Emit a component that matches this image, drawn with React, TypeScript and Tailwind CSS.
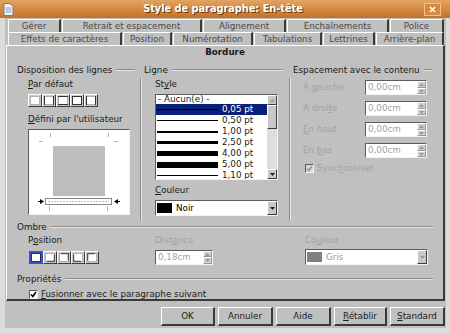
import React from "react";

const sunken = "border border-[#5c5c5c] border-b-[#f4f4f4] border-r-[#f4f4f4]";
const raised = "border border-white border-b-[#3c3c3c] border-r-[#3c3c3c]";

function U({ c }: { c: string }) {
  return <span className="underline underline-offset-[1px]">{c}</span>;
}

function Heading({ children, className }: { children: React.ReactNode; className?: string }) {
  return (
    <div className={"flex h-[10px] items-center gap-[4px] " + (className ?? "")}>
      <span className="whitespace-nowrap leading-[10px]">{children}</span>
      <div className="h-[2px] flex-1 border-t border-t-[#8c8c8c] border-b border-b-[#e6e6e6]" />
    </div>
  );
}

function Tab({ className, label }: { className: string; label: string }) {
  return (
    <div
      className={
        "flex h-[13px] shrink-0 items-center justify-center border-l border-t border-white border-r-2 border-r-[#3a3a3a] leading-none text-[#4a4a4a] " +
        className
      }
    >
      {label}
    </div>
  );
}

function Btn({ className, children }: { className: string; children: React.ReactNode }) {
  return (
    <div
      className={
        "flex h-[19px] items-center justify-center border border-white border-b-2 border-r-2 border-b-[#3a3a3a] border-r-[#3a3a3a] leading-none text-[#202020] " +
        className
      }
    >
      {children}
    </div>
  );
}

function Arrow({ up, gray }: { up?: boolean; gray?: boolean }) {
  return (
    <svg width="5" height="3" viewBox="0 0 5 3">
      <polygon points={up ? "0,3 5,3 2.5,0" : "0,0 5,0 2.5,3"} fill={gray ? "#9a9a9a" : "#222"} />
    </svg>
  );
}

function SpinField({ value, className }: { value: string; className: string }) {
  return (
    <div className={"flex h-[15px] bg-white " + sunken + " " + className}>
      <span className="flex-1 pl-[2px] leading-[13px] text-[#a2a2a2]">{value}</span>
      <div className="flex w-[9px] flex-col bg-[#cfcfcf]">
        <div className="flex flex-1 items-center justify-center border border-white border-b-[#9a9a9a] border-r-[#9a9a9a]">
          <Arrow up gray />
        </div>
        <div className="flex flex-1 items-center justify-center border border-white border-b-[#9a9a9a] border-r-[#9a9a9a]">
          <Arrow gray />
        </div>
      </div>
    </div>
  );
}

function Check({ disabled }: { disabled?: boolean }) {
  return (
    <div className={"flex h-[9px] w-[9px] items-center justify-center " + sunken + (disabled ? " bg-[#d6d6d6]" : " bg-white")}>
      <svg width="7" height="7" viewBox="0 0 7 7">
        <path d="M1 3.5 L2.8 5.5 L6 1" fill="none" stroke={disabled ? "#9a9a9a" : "#000"} strokeWidth="1.6" />
      </svg>
    </div>
  );
}

function Combo({ swatch, label, gray, className }: { swatch: string; label: string; gray?: boolean; className: string }) {
  return (
    <div className={"flex h-[16px] items-center bg-white " + sunken + " " + className}>
      <div className={"ml-[1px] h-[10px] w-[15px] " + swatch} />
      <span className={"ml-[4px] flex-1 leading-none " + (gray ? "text-[#9a9a9a]" : "text-black")}>{label}</span>
      <div className={"flex h-[14px] w-[10px] items-center justify-center bg-[#c8c8c8] " + raised}>
        <Arrow gray={gray} />
      </div>
    </div>
  );
}

function PresetBox({ edges, selected, shadow }: { edges: string; selected?: boolean; shadow?: string }) {
  return (
    <div
      className={
        "flex h-[13px] w-[14px] items-center justify-center " +
        (selected ? "border-2 border-[#3c4ec8] bg-[#c8c8c8]" : raised + " bg-[#c8c8c8]")
      }
    >
      <svg width="10" height="9" viewBox="0 0 10 9">
        <rect x="0.5" y="0.5" width="9" height="8" fill="white" stroke="#b0b0b0" />
        {edges.includes("l") && <line x1="0.5" y1="0" x2="0.5" y2="9" stroke="#333" />}
        {edges.includes("r") && <line x1="9.5" y1="0" x2="9.5" y2="9" stroke="#333" />}
        {edges.includes("t") && <line x1="0" y1="0.5" x2="10" y2="0.5" stroke="#333" />}
        {edges.includes("b") && <line x1="0" y1="8.5" x2="10" y2="8.5" stroke="#333" />}
        {shadow === "br" && <path d="M2 8.5 H9.5 V1.5" fill="none" stroke="#555" strokeWidth="1.5" />}
        {shadow === "tr" && <path d="M2 0.5 H9.5 V7.5" fill="none" stroke="#555" strokeWidth="1.5" />}
        {shadow === "bl" && <path d="M8 8.5 H0.5 V1.5" fill="none" stroke="#555" strokeWidth="1.5" />}
        {shadow === "tl" && <path d="M8 0.5 H0.5 V7.5" fill="none" stroke="#555" strokeWidth="1.5" />}
      </svg>
    </div>
  );
}

const lineStyles: { label: string; h: number }[] = [
  { label: "0,05 pt", h: 1 },
  { label: "0,50 pt", h: 1 },
  { label: "1,00 pt", h: 2 },
  { label: "2,50 pt", h: 3 },
  { label: "4,00 pt", h: 5 },
  { label: "5,00 pt", h: 6 },
  { label: "1,10 pt", h: 1 },
];

function Preview() {
  return (
    <div className={"mt-[5px] h-[86px] w-[102px] bg-white " + sunken}>
      <svg width="100" height="84" viewBox="0 0 100 84">
        <g stroke="#b4b4b4" strokeWidth="1">
          <line x1="10" y1="11.5" x2="14" y2="11.5" />
          <line x1="21.5" y1="3" x2="21.5" y2="7" />
          <line x1="79.5" y1="3" x2="79.5" y2="7" />
          <line x1="85" y1="11.5" x2="89" y2="11.5" />
          <line x1="20.5" y1="76" x2="20.5" y2="81" />
          <line x1="78.5" y1="76" x2="78.5" y2="81" />
        </g>
        <rect x="24" y="16" width="52" height="50" fill="#bdbdbd" />
        <rect x="16.5" y="68.5" width="66" height="6" fill="none" stroke="#111" strokeDasharray="1 1" />
        <line x1="19" y1="71.5" x2="80" y2="71.5" stroke="#bdbdbd" strokeDasharray="2 1" />
        <polygon points="11,69 15,71.5 11,74" fill="#000" />
        <line x1="9" y1="71.5" x2="12" y2="71.5" stroke="#000" />
        <polygon points="89,69 85,71.5 89,74" fill="#000" />
        <line x1="88" y1="71.5" x2="91" y2="71.5" stroke="#000" />
      </svg>
    </div>
  );
}

export default function App() {
  return (
    <div className="flex h-[333px] w-[450px] flex-col overflow-hidden bg-[#dcdcdc] font-['DejaVu_Sans',sans-serif] text-[8.75px] text-[#1a1a1a]">
      {/* title bar */}
      <div className="flex h-[18px] shrink-0 items-center bg-gradient-to-b from-[#e2a463] to-[#c4711f] px-[3px]">
        <svg width="11" height="13" viewBox="0 0 11 13">
          <path d="M1 0.5 H7 L10 3.5 V12.5 H1 Z" fill="#f4f4f4" stroke="#7a7a7a" />
          <path d="M2.5 5 H8.5 M2.5 7 H8.5 M2.5 9 H8.5" stroke="#8aa0c8" />
        </svg>
        <div className="flex-1 pl-[8px] text-center text-[9.75px] font-bold text-white [text-shadow:1px_1px_0_#6a3a10]">
          Style de paragraphe: En-tête
        </div>
        <div className="mr-[6px] flex h-[13px] w-[17px] items-center justify-center border border-[#f0c090] bg-[#d88a3c]">
          <svg width="7" height="7" viewBox="0 0 7 7">
            <path d="M1 1 L6 6 M6 1 L1 6" stroke="white" strokeWidth="1.6" />
          </svg>
        </div>
      </div>

      {/* dialog body */}
      <div className="ml-[5px] flex h-[310px] w-[441px] shrink-0 flex-col bg-[#c0c0c0]">
        <div className="mt-[1px] flex gap-[1px] pl-[3px]">
          <Tab className="w-[53px]" label="Gérer" />
          <Tab className="w-[140px]" label="Retrait et espacement" />
          <Tab className="w-[83px]" label="Alignement" />
          <Tab className="w-[102px]" label="Enchaînements" />
          <Tab className="w-[54px]" label="Police" />
        </div>
        <div className="flex gap-[1px] pl-[3px]">
          <Tab className="w-[114px]" label="Effets de caractères" />
          <Tab className="w-[49px]" label="Position" />
          <Tab className="w-[80px]" label="Numérotation" />
          <Tab className="w-[68px]" label="Tabulations" />
          <Tab className="w-[52px]" label="Lettrines" />
          <Tab className="w-[68px]" label="Arrière-plan" />
        </div>

        {/* panel */}
        <div className="ml-[1px] flex h-[256px] w-[439px] flex-col border-l border-t border-white border-b-2 border-r-2 border-b-[#3a3a3a] border-r-[#3a3a3a]">
          <div className="flex h-[13px] items-center justify-center font-bold leading-none">Bordure</div>

          <div className="mt-[7px] grid grid-cols-[133px_149px_1fr]">
            {/* col 1 */}
            <div className="flex flex-col">
              <Heading className="pl-[10px] pr-[5px]">Disposition des lignes</Heading>
              <div className="flex flex-col pl-[21px] pt-[4px] pb-[5px]">
                <span className="h-[10px] leading-[10px]">
                  <U c="P" />ar défaut
                </span>
                <div className="mt-[5px] flex">
                  <PresetBox edges="" />
                  <PresetBox edges="lr" />
                  <PresetBox edges="tb" />
                  <PresetBox edges="lrtb" />
                  <PresetBox edges="lr" />
                </div>
                <span className="mt-[7px] h-[10px] leading-[10px]">
                  <U c="D" />éfini par l'utilisateur
                </span>
                <Preview />
              </div>
            </div>

            {/* col 2 */}
            <div className="flex flex-col">
              <Heading className="pl-[4px] pr-[6px]">Ligne</Heading>
              <div className="mt-[3px] flex flex-1 flex-col border-l border-l-[#8c8c8c] pl-[14px] pt-[1px] shadow-[inset_1px_0_0_#e6e6e6]">
                <span className="h-[10px] leading-[10px]">
                  St<U c="y" />le
                </span>
                <div className={"mt-[5px] flex h-[86px] w-[123px] overflow-hidden bg-white " + sunken}>
                  <div className="flex flex-1 flex-col">
                    <div className="flex h-[11px] items-center pl-[2px] leading-none">- Aucun(e) -</div>
                    {lineStyles.map((s, i) => (
                      <div
                        key={i}
                        className={"flex h-[11px] shrink-0 items-center leading-none " + (i === 0 ? "bg-[#0a1f78] text-white" : "")}
                      >
                        <div className="ml-[1px] flex w-[61px] items-center">
                          <div className="w-full bg-black" style={{ height: s.h }} />
                        </div>
                        <span className="ml-[4px]">{s.label}</span>
                      </div>
                    ))}
                  </div>
                  <div className="flex w-[10px] flex-col bg-[#dedede]">
                    <div className={"flex h-[10px] items-center justify-center bg-[#c8c8c8] " + raised}>
                      <Arrow up gray />
                    </div>
                    <div className={"h-[24px] bg-[#c8c8c8] " + raised} />
                    <div className="flex-1" />
                    <div className={"flex h-[10px] items-center justify-center bg-[#c8c8c8] " + raised}>
                      <Arrow />
                    </div>
                  </div>
                </div>
                <span className="mt-[5px] h-[10px] leading-[10px]">
                  <U c="C" />ouleur
                </span>
                <Combo className="mt-[5px] w-[123px]" swatch="bg-black" label="Noir" />
                <div className="h-[5px]" />
              </div>
            </div>

            {/* col 3 */}
            <div className="flex flex-col">
              <Heading className="pl-[4px] pr-[11px]">Espacement avec le contenu</Heading>
              <div className="mt-[3px] flex flex-1 flex-col border-l border-l-[#8c8c8c] pl-[13px] pt-[2px] text-[#a2a2a2] shadow-[inset_1px_0_0_#e6e6e6]">
                <div className="flex h-[15px] items-center">
                  <span className="w-[62px]">À <U c="g" />auche</span>
                  <SpinField className="w-[62px]" value="0,00cm" />
                </div>
                <div className="mt-[6px] flex h-[15px] items-center">
                  <span className="w-[62px]">À droi<U c="t" />e</span>
                  <SpinField className="w-[62px]" value="0,00cm" />
                </div>
                <div className="mt-[6px] flex h-[15px] items-center">
                  <span className="w-[62px]"><U c="E" />n haut</span>
                  <SpinField className="w-[62px]" value="0,00cm" />
                </div>
                <div className="mt-[6px] flex h-[15px] items-center">
                  <span className="w-[62px]">En <U c="b" />as</span>
                  <SpinField className="w-[62px]" value="0,00cm" />
                </div>
                <div className="mt-[5px] flex h-[10px] items-center gap-[3px] pl-[2px]">
                  <Check disabled />
                  <span>Sync<U c="h" />roniser</span>
                </div>
              </div>
            </div>
          </div>

          {/* Ombre */}
          <Heading className="mt-[1px] pl-[10px] pr-[10px]">Ombre</Heading>
          <div className="mt-[3px] flex h-[10px] pl-[21px] leading-[10px]">
            <span className="w-[127px]">P<U c="o" />sition</span>
            <span className="w-[150px] text-[#a2a2a2]">Dist<U c="a" />nce</span>
            <span className="text-[#a2a2a2]">Co<U c="u" />leur</span>
          </div>
          <div className="mt-[4px] flex h-[16px] items-center pl-[22px]">
            <div className="flex w-[126px]">
              <PresetBox edges="lrtb" selected />
              <PresetBox edges="" shadow="br" />
              <PresetBox edges="" shadow="tr" />
              <PresetBox edges="" shadow="bl" />
              <PresetBox edges="" shadow="tl" />
            </div>
            <SpinField className="w-[58px]" value="0,18cm" />
            <div className="w-[92px]" />
            <Combo className="w-[123px]" swatch="bg-[#808080]" label="Gris" gray />
          </div>

          {/* Propriétés */}
          <Heading className="mt-[9px] pl-[10px] pr-[10px]">Propriétés</Heading>
          <div className="mt-[5px] flex h-[10px] items-center gap-[3px] pl-[22px]">
            <Check />
            <span className="leading-none"><U c="F" />usionner avec le paragraphe suivant</span>
          </div>
        </div>

        {/* buttons */}
        <div className="mt-[6px] flex justify-end gap-[3px] pr-[1px]">
          <Btn className="w-[54px]">OK</Btn>
          <Btn className="w-[55px]">Annuler</Btn>
          <Btn className="w-[55px]">Aide</Btn>
          <Btn className="w-[53px]"><span><U c="R" />établir</span></Btn>
          <Btn className="w-[55px]"><span><U c="S" />tandard</span></Btn>
        </div>
      </div>
    </div>
  );
}
